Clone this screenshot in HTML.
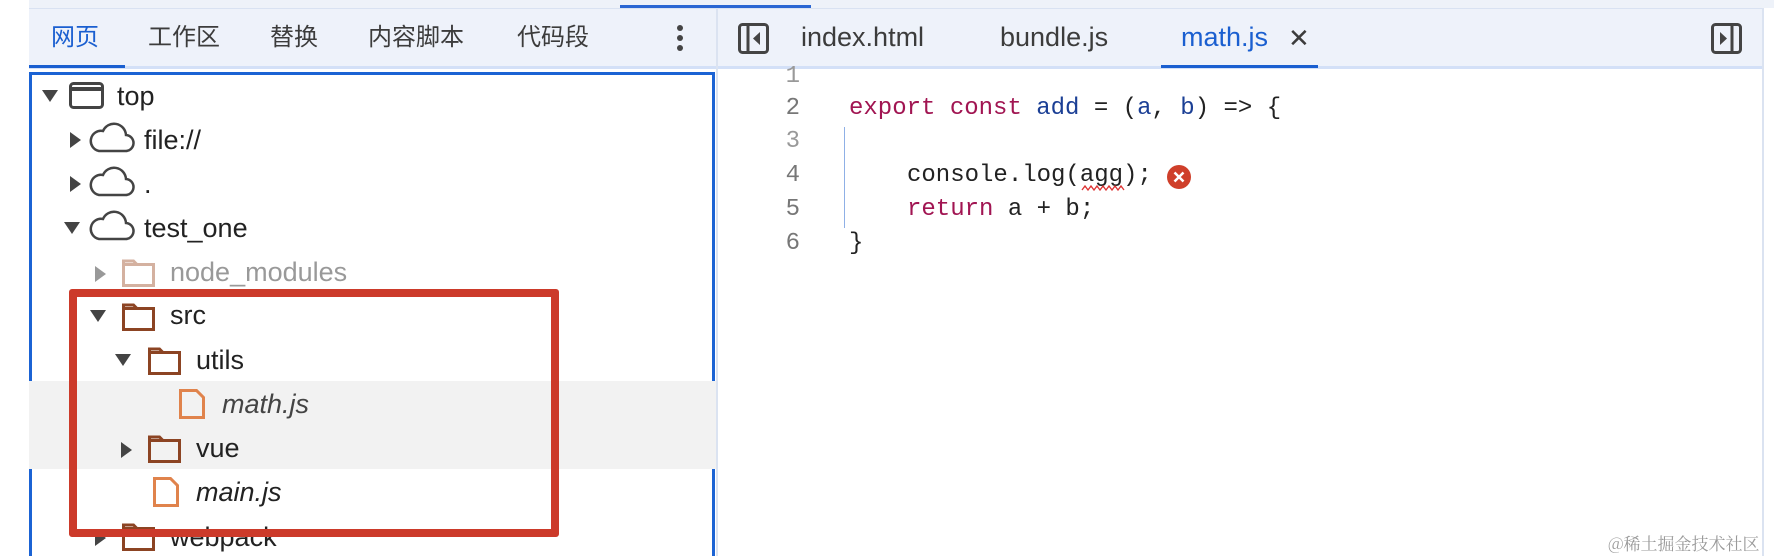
<!DOCTYPE html>
<html><head><meta charset="utf-8"><style>
*{margin:0;padding:0;box-sizing:border-box}
body{width:1774px;height:556px;overflow:hidden;background:#fff;position:relative;font-family:"Liberation Sans","Noto Sans CJK SC",sans-serif}
.a{position:absolute}
.tab{position:absolute;top:20px;font-size:24px;color:#3c3c3c;line-height:36px;white-space:nowrap}
.lt{font-size:27px;top:19px}
.t{position:absolute;font-size:27px;line-height:44px;color:#222;white-space:nowrap}
.mono{font-family:"Liberation Mono","DejaVu Sans Mono",monospace;font-size:24px;position:absolute;white-space:pre;color:#222;line-height:34px}
.ln{color:#777;width:40px;text-align:right;left:760px}
.kw{color:#a11552}.id{color:#1b3f95}
</style></head><body>
<div class="a" style="left:29px;top:0;width:1745px;height:8px;background:#eef2f9"></div>
<div class="a" style="left:620px;top:5px;width:191px;height:3px;background:#2a66d3"></div>
<div class="a" style="left:29px;top:8px;width:1735px;height:60px;background:#eef2fa;border-top:1px solid #d9e2f2"></div>
<div class="a" style="left:29px;top:66px;width:1735px;height:3px;background:#d3e0f7"></div>
<div class="a" style="left:29px;top:65px;width:96px;height:3px;background:#1a5fd0"></div>
<div class="tab" style="left:51px;color:#1a5fd0">网页</div>
<div class="tab" style="left:148px">工作区</div>
<div class="tab" style="left:270px">替换</div>
<div class="tab" style="left:368px">内容脚本</div>
<div class="tab" style="left:517px">代码段</div>
<svg class="a" style="left:672px;top:24px" width="16" height="30"><circle cx="8" cy="4" r="3" fill="#444"/><circle cx="8" cy="14" r="3" fill="#444"/><circle cx="8" cy="24" r="3" fill="#444"/></svg>
<div class="a" style="left:716px;top:8px;width:2px;height:548px;background:#dbe3f1"></div>
<div class="a" style="left:29px;top:72px;width:686px;height:484px;border:3px solid #1b63d4;border-bottom:none"></div>
<div class="a" style="left:29px;top:381px;width:687px;height:88px;background:#f2f2f2"></div>

<!-- tree -->
<svg class="a" style="left:0;top:0" width="716" height="556">
<g fill="#444">
<path d="M42 90h16l-8 12z"/>
<path d="M70 132v16l11-8z"/><path d="M70 176v16l11-8z"/>
<path d="M64 222h16l-8 12z"/>
<path d="M95 266v16l11-8z" fill="#999"/>
<path d="M90 310h16l-8 12z"/>
<path d="M115 354h16l-8 12z"/>
<path d="M121 442v16l11-8z"/>
<path d="M95 530v16l11-8z"/>
</g>
<rect x="70.5" y="83.5" width="32" height="24" rx="3" fill="none" stroke="#444" stroke-width="3"/>
<line x1="70" y1="89" x2="103" y2="89" stroke="#444" stroke-width="4"/>
<g fill="none" stroke="#444" stroke-width="2.5">
<path d="M99 151h26a8 8 0 0 0 1-16a12 12 0 0 0-23-4a9 9 0 0 0-4 20z"/>
<path d="M99 151h26a8 8 0 0 0 1-16a12 12 0 0 0-23-4a9 9 0 0 0-4 20z" transform="translate(0,44)"/>
<path d="M99 151h26a8 8 0 0 0 1-16a12 12 0 0 0-23-4a9 9 0 0 0-4 20z" transform="translate(0,88)"/>
</g>
<g fill="none" stroke-width="3">
<path d="M123.5 264.5h30v21h-30z M123.5 266v-5h10l3 3" stroke="#d4b1a0"/>
<path d="M123.5 308.5h30v21h-30z M123.5 310v-5h10l3 3" stroke="#8c4423"/>
<path d="M149.5 352.5h30v21h-30z M149.5 354v-5h10l3 3" stroke="#8c4423"/>
<path d="M149.5 440.5h30v21h-30z M149.5 442v-5h10l3 3" stroke="#8c4423"/>
<path d="M123.5 528.5h30v21h-30z M123.5 530v-5h10l3 3" stroke="#8c4423"/>
<path d="M180.5 390.5h16l7 7v20h-23z" stroke="#e0834c"/>
<path d="M154.5 478.5h16l7 7v20h-23z" stroke="#e0834c"/>
</g>
</svg>
<div class="t" style="left:117px;top:74px">top</div>
<div class="t" style="left:144px;top:118px">file://</div>
<div class="t" style="left:144px;top:162px">.</div>
<div class="t" style="left:144px;top:206px">test_one</div>
<div class="t" style="left:170px;top:250px;color:#999">node_modules</div>
<div class="t" style="left:170px;top:293px">src</div>
<div class="t" style="left:196px;top:338px">utils</div>
<div class="t" style="left:222px;top:382px;color:#444;font-style:italic">math.js</div>
<div class="t" style="left:196px;top:426px">vue</div>
<div class="t" style="left:196px;top:470px;font-style:italic">main.js</div>
<div class="t" style="left:170px;top:515px">webpack</div>
<div class="a" style="left:69px;top:289px;width:490px;height:248px;border:8px solid #cc3a2a;border-radius:3px"></div>

<!-- right tabs -->
<svg class="a" style="left:738px;top:23px" width="31" height="31"><rect x="1.5" y="1.5" width="28" height="28" rx="3" fill="none" stroke="#444" stroke-width="3"/><line x1="10" y1="2" x2="10" y2="29" stroke="#444" stroke-width="3"/><path d="M22 9v13l-7-6.5z" fill="#444"/></svg>
<svg class="a" style="left:1711px;top:23px" width="31" height="31"><rect x="1.5" y="1.5" width="28" height="28" rx="3" fill="none" stroke="#444" stroke-width="3"/><line x1="21" y1="2" x2="21" y2="29" stroke="#444" stroke-width="3"/><path d="M9 9v13l7-6.5z" fill="#444"/></svg>
<div class="tab lt" style="left:801px">index.html</div>
<div class="tab lt" style="left:1000px">bundle.js</div>
<div class="tab lt" style="left:1181px;color:#1a5fd0">math.js</div>
<div class="tab" style="left:1288px;font-size:26px">✕</div>
<div class="a" style="left:1161px;top:65px;width:157px;height:3px;background:#1a5fd0"></div>
<div class="a" style="left:1762px;top:8px;width:2px;height:548px;background:#dbe3f1"></div>

<!-- code -->
<div class="mono ln" style="top:60px;color:#999">1</div>
<div class="mono ln" style="top:92px">2</div>
<div class="mono ln" style="top:125px;color:#999">3</div>
<div class="mono ln" style="top:159px">4</div>
<div class="mono ln" style="top:193px">5</div>
<div class="mono ln" style="top:227px">6</div>
<div class="mono" style="left:849px;top:92px"><span class="kw">export</span> <span class="kw">const</span> <span class="id">add</span> = (<span class="id">a</span>, <span class="id">b</span>) =&gt; {</div>
<div class="mono" style="left:907px;top:159px">console.log(agg);</div>
<div class="mono" style="left:907px;top:193px"><span class="kw">return</span> a + b;</div>
<div class="mono" style="left:849px;top:227px">}</div>
<div class="a" style="left:844px;top:127px;width:1px;height:101px;background:#8fb0e6"></div>
<svg class="a" style="left:1080px;top:184px" width="70" height="8"><path d="M2 6l3-4 3 4 3-4 3 4 3-4 3 4 3-4 3 4 3-4 3 4 3-4 3 4 3-4 3 4" fill="none" stroke="#d33" stroke-width="1.3"/></svg>
<svg class="a" style="left:1167px;top:165px" width="24" height="24"><circle cx="12" cy="12" r="12" fill="#cf3f2a"/><path d="M7.5 7.5l9 9M16.5 7.5l-9 9" stroke="#fff" stroke-width="2.5"/></svg>
<div class="a" style="left:1608px;top:530px;font-size:17px;color:#9a9a9a;font-family:'Noto Serif CJK SC','Liberation Serif',serif">@稀土掘金技术社区</div>
</body></html>
